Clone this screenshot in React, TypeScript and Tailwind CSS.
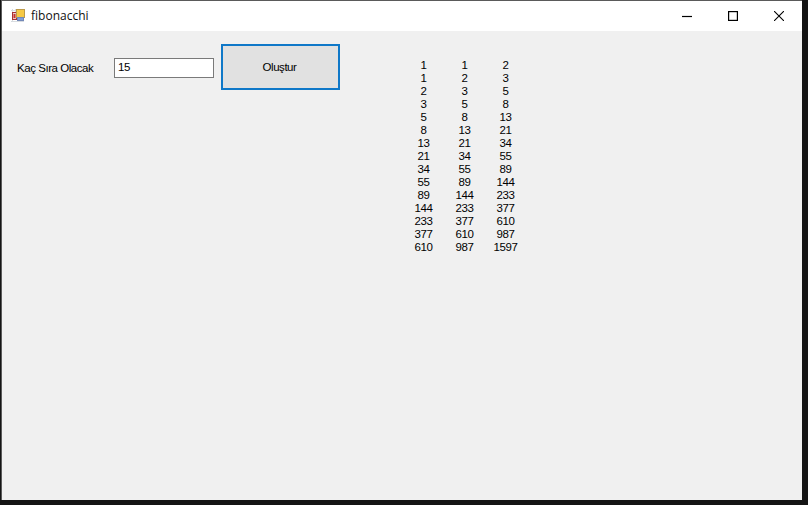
const COLUMNS = [
  [1, 1, 2, 3, 5, 8, 13, 21, 34, 55, 89, 144, 233, 377, 610],
  [1, 2, 3, 5, 8, 13, 21, 34, 55, 89, 144, 233, 377, 610, 987],
  [2, 3, 5, 8, 13, 21, 34, 55, 89, 144, 233, 377, 610, 987, 1597],
]

function AppIcon() {
  return (
    <svg width="14" height="14" viewBox="0 0 14 14" className="shrink-0">
      <path d="M1.5 0V13M4.5 0V3M0 1.5H5M0 12.5H13" stroke="#d8dce0" strokeWidth="1" fill="none" />
      <rect x="1.5" y="3.5" width="4" height="7" fill="#e8c8c8" stroke="#a83030" />
      <rect x="2.5" y="5" width="2" height="4" fill="#c8322c" />
      <rect x="5.5" y="0.5" width="8" height="8" fill="#f6c945" stroke="#bc9a4a" />
      <rect x="6.5" y="8.5" width="6" height="3" fill="#7f9fd8" stroke="#7288b8" />
    </svg>
  )
}

export default function App() {
  return (
    <div className="h-[505px] w-[808px] overflow-hidden bg-[#141414] font-['Liberation_Sans',sans-serif]">
      <div className="ml-px flex h-[500px] w-[801px] flex-col border-l border-t border-[#5a5a5a] bg-[#f0f0f0]">
        <div className="flex h-[30px] shrink-0 items-center bg-white pl-[9px]">
          <AppIcon />
          <span className="ml-[6px] font-['Open_Sans',sans-serif] text-[12px] text-[#111]">fibonacchi</span>
          <div className="ml-auto flex h-full items-center">
            <div className="flex w-[46px] justify-center">
              <svg width="10" height="10" viewBox="0 0 10 10"><path d="M0 5.5H10" stroke="#000" strokeWidth="1.2" /></svg>
            </div>
            <div className="flex w-[46px] justify-center">
              <svg width="10" height="10" viewBox="0 0 10 10"><rect x="0.6" y="0.6" width="8.8" height="8.8" fill="none" stroke="#000" strokeWidth="1.2" /></svg>
            </div>
            <div className="flex w-[46px] justify-center">
              <svg width="10" height="10" viewBox="0 0 10 10"><path d="M0 0L10 10M10 0L0 10" stroke="#000" strokeWidth="1.1" /></svg>
            </div>
          </div>
        </div>
        <div className="flex items-start pl-[15px] pt-[13px]">
          <div className="flex items-start">
            <span className="mt-[17px] w-[97px] text-[11.5px] leading-[14px] tracking-[-0.45px] text-black">Kaç Sıra Olacak</span>
            <div className="mt-[14px] flex h-[20px] w-[100px] items-center border border-[#7a7a7a] bg-white pl-[3px] text-[11.5px] tracking-[-0.3px] text-black">15</div>
            <button className="ml-[7px] flex h-[46px] w-[119px] items-center justify-center border-2 border-[#0f78c8] bg-[#e1e1e1] pr-[2px] pt-[1px] text-[11.5px] tracking-[-0.45px] text-black">Oluştur</button>
          </div>
          <div className="ml-[63px] mt-[15px] flex">
            {COLUMNS.map((col, i) => (
              <div key={i} className="flex w-[41px] flex-col items-center text-[11.5px] leading-[13px] tracking-[-0.4px] text-black">
                {col.map((n, j) => <span key={j}>{n}</span>)}
              </div>
            ))}
          </div>
        </div>
      </div>
    </div>
  )
}
